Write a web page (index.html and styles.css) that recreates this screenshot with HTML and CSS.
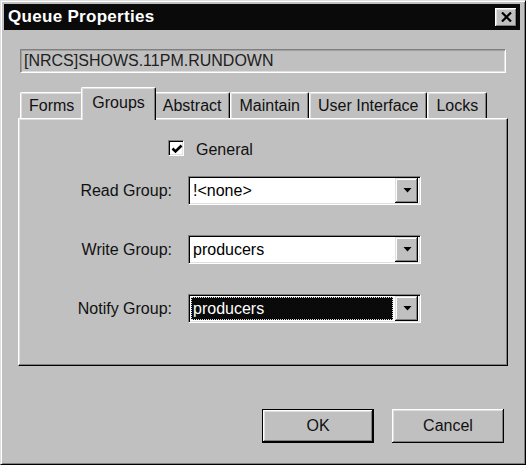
FILE: index.html
```html
<!DOCTYPE html>
<html>
<head>
<meta charset="utf-8">
<title>Queue Properties</title>
<link rel="stylesheet" href="styles.css">
</head>
<body>
<div class="window">
  <div class="titlebar">
    <span class="title">Queue Properties</span>
    <span class="close" aria-label="Close">
      <svg width="11" height="10" viewBox="0 0 11 10"><path d="M1 0.5 L10 9.5 M10 0.5 L1 9.5" stroke="#000" stroke-width="2.2" fill="none"/></svg>
    </span>
  </div>
  <div class="content">
    <div class="path">[NRCS]SHOWS.11PM.RUNDOWN</div>
    <div class="tabs">
      <div class="tab">Forms</div>
      <div class="tab active">Groups</div>
      <div class="tab">Abstract</div>
      <div class="tab">Maintain</div>
      <div class="tab">User Interface</div>
      <div class="tab">Locks</div>
    </div>
    <div class="panel">
      <div class="check-row">
        <span class="checkbox">
          <svg width="12" height="12" viewBox="0 0 12 12"><path d="M1.5 5.5 L4.5 8.5 L10.5 2.5" stroke="#000" stroke-width="2.6" fill="none"/></svg>
        </span>
        <span class="check-label">General</span>
      </div>
      <div class="fields">
        <span class="label">Read Group:</span>
        <div class="combo">
          <span class="value">!&lt;none&gt;</span>
          <span class="arrow"><svg width="9" height="5" viewBox="0 0 9 5"><path d="M0.5 0 H8.5 L4.5 4.5 Z" fill="#000"/></svg></span>
        </div>
        <span class="label">Write Group:</span>
        <div class="combo">
          <span class="value">producers</span>
          <span class="arrow"><svg width="9" height="5" viewBox="0 0 9 5"><path d="M0.5 0 H8.5 L4.5 4.5 Z" fill="#000"/></svg></span>
        </div>
        <span class="label">Notify Group:</span>
        <div class="combo">
          <span class="value selected">producers</span>
          <span class="arrow"><svg width="9" height="5" viewBox="0 0 9 5"><path d="M0.5 0 H8.5 L4.5 4.5 Z" fill="#000"/></svg></span>
        </div>
      </div>
    </div>
    <div class="buttons">
      <span class="btn default">OK</span>
      <span class="btn">Cancel</span>
    </div>
  </div>
</div>
</body>
</html>
```

FILE: styles.css
```css
* { box-sizing: border-box; }
html, body { margin: 0; padding: 0; }
body {
  width: 526px;
  height: 465px;
  overflow: hidden;
  background: #c0c0c0;
  font-family: "Liberation Sans", Arial, sans-serif;
  font-size: 16px;
  color: #000;
}
.window {
  width: 526px;
  height: 465px;
  background: #c0c0c0;
  border: 1px solid;
  border-color: #dfdfdf #000 #000 #dfdfdf;
  box-shadow: inset 1px 1px #fff, inset -1px -1px #808080;
  padding: 3px;
  display: flex;
  flex-direction: column;
}
.titlebar {
  height: 26px;
  margin-right: 2px;
  background: #0a0a0a;
  color: #fff;
  display: flex;
  align-items: center;
  justify-content: space-between;
  padding: 0 3px 0 4px;
}
.title {
  font-weight: bold;
  font-size: 17px;
  letter-spacing: 0.3px;
}
.close {
  width: 22px;
  height: 19px;
  background: #c0c0c0;
  box-shadow: inset -1px -1px #000, inset 1px 1px #fff, inset -2px -2px #808080, inset 2px 2px #dfdfdf;
  display: flex;
  align-items: center;
  justify-content: center;
}
.content {
  flex: 1;
  display: flex;
  flex-direction: column;
  padding: 19px 14px 0 14px;
}
.path {
  margin-left: 2px;
  width: 486px;
  height: 24px;
  border: 1px solid;
  border-color: #808080 #fff #fff #808080;
  box-shadow: inset 1px 1px #a0a0a0, inset -1px -1px #dfdfdf;
  padding-left: 3px;
  display: flex;
  align-items: center;
  color: #202020;
}
.tabs {
  margin-top: 14px;
  height: 31px;
  padding-left: 2px;
  display: flex;
  align-items: flex-end;
  position: relative;
  z-index: 1;
}
.tab {
  height: 26px;
  padding: 0 8px;
  display: flex;
  align-items: center;
  border-left: 1px solid #fff;
  border-top: 1px solid #fff;
  border-right: 1px solid #000;
  border-radius: 2px 2px 0 0;
  box-shadow: inset -1px 0 #808080, inset 1px 1px #dfdfdf;
  background: #c0c0c0;
  color: #111;
}
.tab.active {
  height: 33px;
  margin: 0 -2px -2px -2px;
  padding: 0 10px 3px 10px;
  position: relative;
  z-index: 2;
}
.panel {
  width: 490px;
  height: 248px;
  border: 1px solid;
  border-color: #fff #000 #000 #fff;
  box-shadow: inset -1px -1px #808080, inset 1px 1px #dfdfdf;
  padding: 21px 0 0 1px;
}
.check-row {
  display: flex;
  align-items: center;
  margin-left: 148px;
  gap: 12px;
  height: 16px;
}
.checkbox {
  width: 16px;
  height: 16px;
  background: #fff;
  border: 1px solid;
  border-color: #808080 #fff #fff #808080;
  box-shadow: inset 1px 1px #000, inset -1px -1px #dfdfdf;
  display: flex;
  align-items: center;
  justify-content: center;
  padding: 1px 0 0 1px;
}
.check-label {
  color: #111;
  padding-top: 4px;
}
.fields {
  margin-top: 20px;
  display: grid;
  grid-template-columns: 152px 233px;
  grid-auto-rows: 29px;
  column-gap: 16px;
  row-gap: 30px;
  align-items: center;
}
.label {
  text-align: right;
  color: #111;
}
.combo {
  height: 29px;
  background: #fff;
  border: 1px solid;
  border-color: #808080 #fff #fff #808080;
  box-shadow: inset 1px 1px #000, inset -1px -1px #dfdfdf;
  padding: 1px;
  display: flex;
}
.value {
  flex: 1;
  margin: 1px 2px 1px 1px;
  padding-left: 2px;
  display: flex;
  align-items: center;
  color: #000;
}
.value.selected {
  background: #0a0a0a;
  color: #fff;
  outline: 1px dotted #ddd;
  outline-offset: -1px;
}
.arrow {
  width: 23px;
  margin-right: 1px;
  background: #c0c0c0;
  box-shadow: inset -1px -1px #000, inset 1px 1px #dfdfdf, inset -2px -2px #808080, inset 2px 2px #fff;
  display: flex;
  align-items: center;
  justify-content: center;
  padding-left: 1px;
}
.buttons {
  margin-top: 43px;
  display: flex;
  justify-content: flex-end;
  gap: 18px;
  padding-right: 4px;
}
.btn {
  width: 112px;
  height: 34px;
  background: #c0c0c0;
  display: flex;
  align-items: center;
  justify-content: center;
  box-shadow: inset -1px -1px #000, inset 1px 1px #fff, inset -2px -2px #808080, inset 2px 2px #dfdfdf;
  color: #111;
}
.btn.default {
  border: 1px solid #000;
  box-shadow: inset -1px -1px #000, inset 1px 1px #fff, inset -2px -2px #808080, inset 2px 2px #dfdfdf;
}
```
